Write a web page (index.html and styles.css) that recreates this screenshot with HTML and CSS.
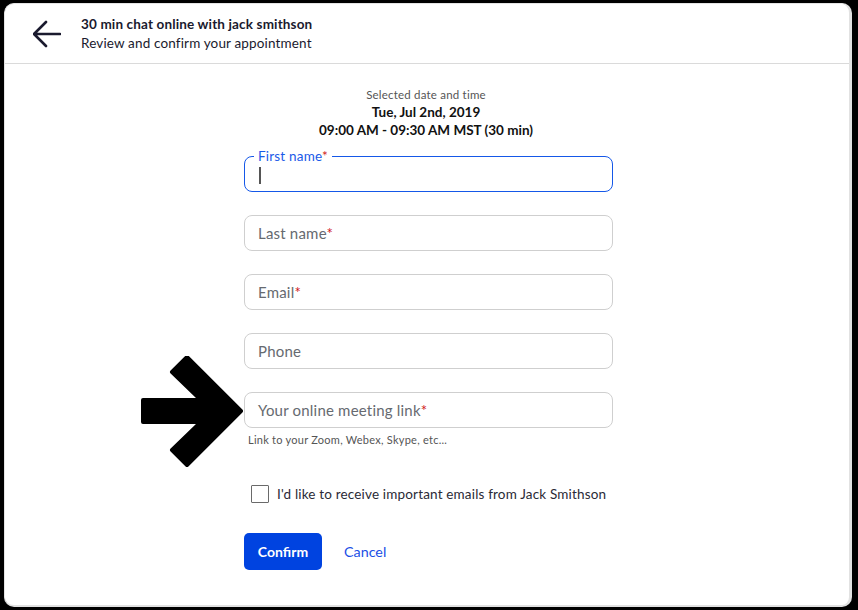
FILE: index.html
```html
<!DOCTYPE html>
<html>
<head>
<meta charset="utf-8">
<link rel="stylesheet" href="styles.css">
</head>
<body>
<div class="card">
  <header class="head">
    <svg class="back" width="28" height="28" viewBox="0 0 28 28">
      <path d="M13 2 L1 14 L13 26 M1 14 H27" fill="none" stroke="#1a1a2e" stroke-width="2.6" stroke-linecap="round" stroke-linejoin="round"/>
    </svg>
    <div class="head-text">
      <div class="title">30 min chat online with jack smithson</div>
      <div class="sub">Review and confirm your appointment</div>
    </div>
  </header>
  <main class="main">
    <div class="when">
      <div class="when-label">Selected date and time</div>
      <div class="when-strong">Tue, Jul 2nd, 2019</div>
      <div class="when-strong">09:00 AM - 09:30 AM MST (30 min)</div>
    </div>
    <form class="form">
      <div class="field focused">
        <span class="float">First name<span class="req">*</span></span>
        <span class="caret"></span>
      </div>
      <div class="field"><span class="ph">Last name<span class="req">*</span></span></div>
      <div class="field"><span class="ph">Email<span class="req">*</span></span></div>
      <div class="field"><span class="ph">Phone</span></div>
      <div class="group">
        <div class="field"><span class="ph">Your online meeting link<span class="req">*</span></span></div>
        <div class="hint">Link to your Zoom, Webex, Skype, etc...</div>
      </div>
      <label class="check"><span class="box"></span><span>I'd like to receive important emails from Jack Smithson</span></label>
      <div class="actions">
        <button type="button" class="confirm">Confirm</button>
        <a class="cancel">Cancel</a>
      </div>
    </form>
  </main>
  <svg class="pointer" width="110" height="114" viewBox="0 0 110 114">
    <path d="M47 1 L101 55 L47 109 L32 94 L61 66 L3 66 L3 44 L61 44 L32 16 Z" fill="#000" stroke="#000" stroke-width="4" stroke-linejoin="round"/>
  </svg>
</div>
</body>
</html>
```
FILE: styles.css
```css
html, body {
  margin: 0;
  padding: 0;
  background: #000;
}
body {
  width: 858px;
  height: 610px;
  padding: 3px 6px 3px 4px;
  box-sizing: border-box;
  font-family: Lato, "Liberation Sans", sans-serif;
  color: #1a1a2e;
}
.card {
  position: relative;
  background: #fff;
  height: 604px;
  box-sizing: border-box;
  border: 1px solid #e4e4e4;
  border-right: 3px solid #e2e2e2;
  border-bottom: 2px solid #e2e2e2;
  border-radius: 10px;
  overflow: hidden;
}
.head {
  height: 59px;
  border-bottom: 1px solid #dadada;
  display: flex;
  align-items: center;
  padding-left: 28px;
  gap: 20px;
}
.back {
  display: block;
}
.head-text {
  line-height: 19px;
  font-size: 13.5px;
  letter-spacing: 0.15px;
}
.title {
  font-weight: 700;
}
.sub {
  color: #1a1a2e;
}
.main {
  display: flex;
  flex-direction: column;
  align-items: center;
  padding-top: 23px;
}
.when {
  text-align: center;
  margin-left: -2px;
}
.when-label {
  font-size: 11.5px;
  letter-spacing: 0.2px;
  line-height: 16px;
  color: #555;
}
.when-strong {
  font-size: 13.5px;
  font-weight: 700;
  line-height: 18px;
  color: #111;
}
.form {
  width: 369px;
  margin-top: 17px;
  margin-left: 3px;
  display: flex;
  flex-direction: column;
  gap: 23px;
}
.field {
  position: relative;
  height: 36px;
  box-sizing: border-box;
  border: 1px solid #cfcfcf;
  border-radius: 8px;
  display: flex;
  align-items: center;
  padding-left: 13px;
  font-size: 15px;
  letter-spacing: 0.2px;
  color: #666a70;
}
.field.focused {
  border: 1.5px solid #1558e8;
}
.req {
  color: #d01818;
}
.float {
  position: absolute;
  top: -9px;
  left: 9px;
  background: #fff;
  padding: 0 4px;
  font-size: 13.5px;
  line-height: 16px;
  color: #1a5ae8;
}
.caret {
  width: 1.5px;
  height: 17px;
  background: #555;
  margin-left: 1px;
  margin-top: 2px;
}
.hint {
  font-size: 11px;
  letter-spacing: 0.25px;
  color: #555;
  margin-top: 5px;
  margin-left: 4px;
}
.group {
  display: flex;
  flex-direction: column;
}
.check {
  display: flex;
  align-items: center;
  gap: 8px;
  margin-top: 16px;
  margin-left: 7px;
  font-size: 13.5px;
  letter-spacing: 0.17px;
  color: #2a2a36;
}
.box {
  width: 18px;
  height: 18px;
  box-sizing: border-box;
  border: 1.5px solid #6a6a6a;
  border-radius: 1px;
}
.actions {
  display: flex;
  align-items: center;
  gap: 22px;
  margin-top: 7px;
}
.confirm {
  height: 37px;
  width: 78px;
  border: none;
  border-radius: 5px;
  background: #0043e0;
  color: #fff;
  font-family: Lato, "Liberation Sans", sans-serif;
  font-weight: 700;
  font-size: 14px;
  padding: 0;
}
.cancel {
  color: #1a4fe6;
  font-size: 14.3px;
}
.pointer {
  position: absolute;
  left: 135px;
  top: 352px;
}
```
